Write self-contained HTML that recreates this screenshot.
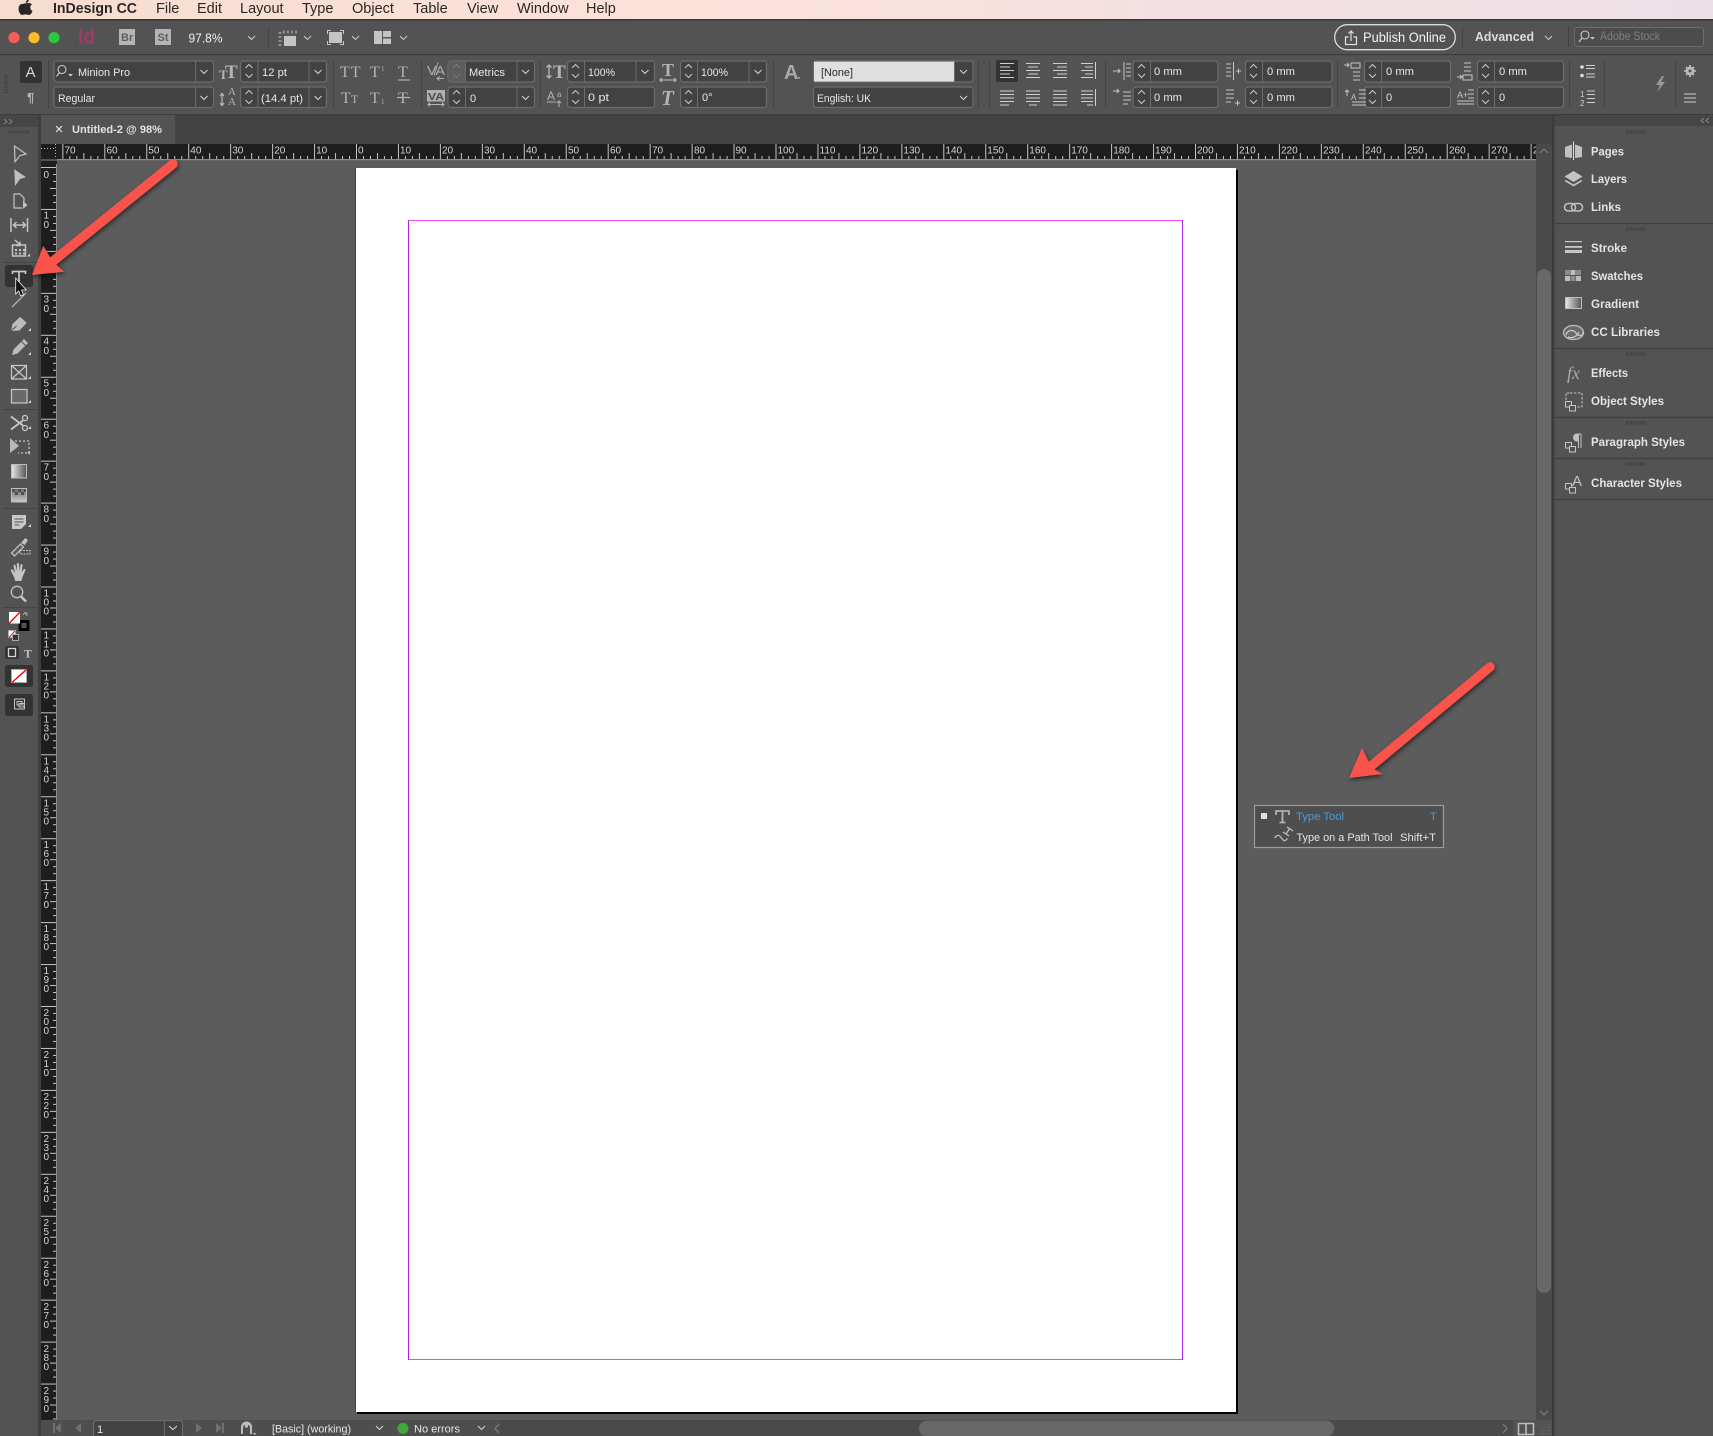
<!DOCTYPE html>
<html><head><meta charset="utf-8"><title>InDesign CC</title>
<style>
html,body{margin:0;padding:0;background:#535353;width:1713px;height:1436px;overflow:hidden}
svg{display:block}
text{font-family:"Liberation Sans",sans-serif;white-space:pre}
.m{font-size:14.5px;fill:#2b2623}
.f{font-size:11px;fill:#e8e8e8}
.p{font-size:11.5px;font-weight:bold;fill:#e4e4e4}
.s{font-family:"Liberation Serif",serif;fill:#b4b4b4}
.h{font-size:10px;fill:#d4d4d4}
.st{font-size:11px;fill:#e6e6e6}
.fb{fill:#424242;stroke:#6c6c6c;stroke-width:1.2}
</style></head><body>
<svg width="1713" height="1436" viewBox="0 0 1713 1436" xmlns="http://www.w3.org/2000/svg">
<defs>
<linearGradient id="mg" x1="0" x2="1" y1="0" y2="0"><stop offset="0" stop-color="#f7dccf"/><stop offset=".4" stop-color="#fde2da"/><stop offset=".72" stop-color="#f3e0e3"/><stop offset="1" stop-color="#ece0e6"/></linearGradient>
<linearGradient id="g1" x1="0" x2="1" y1="0" y2="0"><stop offset="0" stop-color="#e8e8e8"/><stop offset="1" stop-color="#555"/></linearGradient>
<linearGradient id="g2" x1="0" x2="0" y1="0" y2="1"><stop offset="0" stop-color="#666"/><stop offset="1" stop-color="#ccc"/></linearGradient>
<pattern id="hr" patternUnits="userSpaceOnUse" x="356" y="144" width="41.95" height="16"><path d="M.5 0V15M7.5 12V15M14.5 12V15M21.5 9V15M28.5 12V15M35.5 12V15" stroke="#c4c4c4" stroke-width="1" fill="none"/></pattern>
<pattern id="vr" patternUnits="userSpaceOnUse" x="41" y="167" width="16" height="41.95"><path d="M0 .5H15M12 7.5H15M12 14.5H15M9 21.5H15M12 28.5H15M12 35.5H15" stroke="#c4c4c4" stroke-width="1" fill="none"/></pattern>
</defs>

<!-- base -->
<rect width="1713" height="1436" fill="#535353"/>
<rect width="1713" height="19.5" fill="url(#mg)"/>
<rect y="19" width="1713" height="1.5" fill="#3b3735"/>
<rect y="54" width="1713" height="1.2" fill="#3c3c3c"/>
<rect y="114" width="1713" height="1.2" fill="#3c3c3c"/>
<rect x="38" y="115" width="1516" height="29" fill="#424242"/>
<rect y="115" width="38" height="12" fill="#464646"/>
<rect x="1554" y="115" width="159" height="11" fill="#464646"/>
<rect x="38" y="115" width="3" height="1321" fill="#3f3f3f"/>
<rect x="1552" y="115" width="2.4" height="1321" fill="#3c3c3c"/>
<rect x="41" y="115" width="134" height="29" fill="#535353"/>

<!-- menu -->
<path fill="#2a2625" d="M26 3.2C24.4 3.2 23.3 4 22 4 20 4 18.6 6 18.6 9 18.6 12 20.5 15 22 15 23.3 15 24 14.4 25.5 14.4 27 14.4 27.5 15 29 15 30.5 15 32 12.5 32.5 11 29.7 9.8 29.5 5.8 32 4.4 31 3.3 29.5 3 28.5 3 27.6 3 26.8 3.2 26 3.2ZM25.7 2.8C25.7 1.3 26.8 0 28.8 -.5 28.9 1.4 27.7 2.8 25.7 2.8Z"/>
<text x="53" y="13" class="m" font-weight="bold" textLength="84" lengthAdjust="spacingAndGlyphs">InDesign CC</text>
<text x="156" y="13" class="m">File</text><text x="197" y="13" class="m">Edit</text><text x="240" y="13" class="m">Layout</text><text x="302" y="13" class="m">Type</text><text x="352" y="13" class="m">Object</text><text x="413" y="13" class="m">Table</text><text x="467" y="13" class="m">View</text><text x="517" y="13" class="m">Window</text><text x="586" y="13" class="m">Help</text>

<!-- row 1 -->
<circle cx="14" cy="37.7" r="5.6" fill="#fb5b55"/><circle cx="34" cy="37.7" r="5.6" fill="#fdb92c"/><circle cx="54" cy="37.7" r="5.6" fill="#2ec640"/>
<text x="78" y="43.5" font-size="21" font-weight="bold" fill="#a23a68" textLength="17" lengthAdjust="spacingAndGlyphs">Id</text>
<rect x="119" y="29" width="16" height="16" fill="#b5b5b5"/><text x="121" y="41" font-size="11" font-weight="bold" fill="#5f5f5f">Br</text>
<rect x="155" y="29" width="16" height="16" fill="#b5b5b5"/><text x="157.5" y="41" font-size="11" font-weight="bold" fill="#5f5f5f">St</text>
<text x="188.5" y="42.5" font-size="13" fill="#f0f0f0" textLength="34" lengthAdjust="spacingAndGlyphs">97.8%</text>
<path d="M248 36l3.5 3.5 3.5-3.5M304 36l3.5 3.5 3.5-3.5M352 36l3.5 3.5 3.5-3.5M400 36l3.5 3.5 3.5-3.5" fill="none" stroke="#c8c8c8" stroke-width="1.1"/>
<rect x="268" y="27" width="1" height="21" fill="#444"/>
<rect x="284" y="36" width="12" height="10" fill="#c4c4c4"/>
<path d="M278.5 33h3M278.5 37h3M278.5 41h3M278.5 45h3M284 30.500v3M288 30.500v3M292 30.500v3M296 30.500v3" stroke="#c4c4c4" fill="none"/>
<rect x="329" y="32" width="13" height="11" fill="#c4c4c4"/>
<path d="M327.5 34v-3.5h3.5M340 30.5h3.5v3.5M343.5 41v3.5h-3.5M331 44.5h-3.5v-3.5" stroke="#c4c4c4" fill="none"/>
<path fill="#c4c4c4" d="M374 31h8v13h-8zM383 31h8v6h-8zM383 38.5h8v5.5h-8z"/>
<rect x="1334.7" y="24.7" width="120.6" height="25" rx="12.5" fill="none" stroke="#dcdcdc" stroke-width="1.3"/>
<path d="M1348.5 37h-3v7.500h11v-7.500h-3M1351 41v-9.500M1348.500 33.500l2.500-2.500 2.500 2.500" fill="none" stroke="#e0e0e0" stroke-width="1.2"/>
<text x="1363" y="42" font-size="13.5" fill="#f4f4f4" textLength="83" lengthAdjust="spacingAndGlyphs">Publish Online</text>
<rect x="1462" y="27" width="1" height="20" fill="#444"/>
<text x="1475" y="41" font-size="13" font-weight="bold" fill="#dcdcdc" textLength="59" lengthAdjust="spacingAndGlyphs">Advanced</text>
<path d="M1545 36l3.5 3.5 3.5-3.5" fill="none" stroke="#c8c8c8" stroke-width="1.1"/>
<rect x="1568" y="27" width="1" height="20" fill="#444"/>
<rect x="1574.5" y="27.5" width="129" height="19" rx="2.5" fill="#4c4c4c" stroke="#6c6c6c"/>
<circle cx="1585" cy="35" r="4" fill="none" stroke="#c8c8c8" stroke-width="1.1"/><path d="M1582 38l-3 4" stroke="#c8c8c8" stroke-width="1.3"/><path d="M1590 37h5l-2.5 2.5z" fill="#c8c8c8"/>
<text x="1600" y="40" font-size="11.5" fill="#7e7e7e" textLength="60" lengthAdjust="spacingAndGlyphs">Adobe Stock</text>

<!-- row 2 -->
<path d="M4 75h4M4 77.5h4M4 80h4M4 82.5h4M4 85h4M4 87.5h4M4 90h4M4 92.5h4" stroke="#424242" fill="none"/>
<rect x="20" y="61" width="22" height="22" rx="2" fill="#333"/>
<text x="25.5" y="77" font-size="15" fill="#d8d8d8">A</text>
<text x="27" y="102" font-size="13" font-weight="bold" fill="#b8b8b8">¶</text>
<path fill="#444" d="M48 61h1v47h-1zM333 61h1v47h-1zM421 61h1v47h-1zM540 61h1v47h-1zM773 61h1v47h-1zM978 61h1v47h-1zM989 61h1v47h-1zM1105 61h1v47h-1zM1337 61h1v47h-1zM1569 61h1v47h-1zM1604 61h1v47h-1zM1675 61h1v47h-1z"/>

<!-- fields -->
<rect class="fb" x="54" y="61" width="159.5" height="21" rx="3"/><rect class="fb" x="54" y="87" width="159.5" height="20.5" rx="3"/>
<rect class="fb" x="240.5" y="61" width="86" height="21" rx="3"/><rect class="fb" x="240.5" y="87" width="86" height="20.5" rx="3"/>
<rect class="fb" x="448" y="61" width="86.5" height="21" rx="3"/><rect class="fb" x="448" y="87" width="86.5" height="20.5" rx="3"/>
<rect x="448.6" y="61.6" width="16.4" height="20" rx="2" fill="#5d5d5d"/>
<rect class="fb" x="567.5" y="61" width="87" height="21" rx="3"/><rect class="fb" x="567.5" y="87" width="87" height="20.5" rx="3"/>
<rect class="fb" x="680.5" y="61" width="86" height="21" rx="3"/><rect class="fb" x="680.5" y="87" width="86" height="20.5" rx="3"/>
<rect class="fb" x="813.5" y="61" width="159.5" height="21" rx="3"/><rect class="fb" x="813.5" y="87" width="159.5" height="20.5" rx="3"/>
<rect x="814" y="61.6" width="140.5" height="20" fill="#e0e0e0"/>
<rect class="fb" x="1133" y="61" width="85" height="21" rx="3"/><rect class="fb" x="1133" y="87" width="85" height="20.5" rx="3"/>
<rect class="fb" x="1245.5" y="61" width="86.5" height="21" rx="3"/><rect class="fb" x="1245.5" y="87" width="86.5" height="20.5" rx="3"/>
<rect class="fb" x="1364.5" y="61" width="86" height="21" rx="3"/><rect class="fb" x="1364.5" y="87" width="86" height="20.5" rx="3"/>
<rect class="fb" x="1477.5" y="61" width="86" height="21" rx="3"/><rect class="fb" x="1477.5" y="87" width="86" height="20.5" rx="3"/>
<path stroke="#6c6c6c" fill="none" d="M195.5 61v21M195.5 87v20M258 61v21M258 87v20M309 61v21M309 87v20M465.5 61v21M465.5 87v20M517 61v21M517 87v20M584.5 61v21M584.5 87v20M636 61v21M697.5 61v21M697.5 87v20M749 61v21M954.5 61v21M1150.5 61v21M1150.5 87v20M1262.5 61v21M1262.5 87v20M1381.5 61v21M1381.5 87v20M1494.5 61v21M1494.5 87v20"/>
<!-- spinners -->
<path fill="none" stroke="#c8c8c8" stroke-width="1" d="M245.5 68l3.5-3.5 3.5 3.5M245.5 74l3.5 3.5 3.5-3.5M245.5 94l3.5-3.5 3.5 3.5M245.5 100l3.5 3.5 3.5-3.5
M453 94l3.5-3.5 3.5 3.5M453 100l3.5 3.5 3.5-3.5
M572 68l3.5-3.5 3.5 3.5M572 74l3.5 3.5 3.5-3.5M572 94l3.5-3.5 3.5 3.5M572 100l3.5 3.5 3.5-3.5
M685 68l3.5-3.5 3.5 3.5M685 74l3.5 3.5 3.5-3.5M685 94l3.5-3.5 3.5 3.5M685 100l3.5 3.5 3.5-3.5
M1138 68l3.5-3.5 3.5 3.5M1138 74l3.5 3.5 3.5-3.5M1138 94l3.5-3.5 3.5 3.5M1138 100l3.5 3.5 3.5-3.5
M1250 68l3.5-3.5 3.5 3.5M1250 74l3.5 3.5 3.5-3.5M1250 94l3.5-3.5 3.5 3.5M1250 100l3.5 3.5 3.5-3.5
M1369 68l3.5-3.5 3.5 3.5M1369 74l3.5 3.5 3.5-3.5M1369 94l3.5-3.5 3.5 3.5M1369 100l3.5 3.5 3.5-3.5
M1482 68l3.5-3.5 3.5 3.5M1482 74l3.5 3.5 3.5-3.5M1482 94l3.5-3.5 3.5 3.5M1482 100l3.5 3.5 3.5-3.5"/>
<path fill="none" stroke="#7a7a7a" d="M453 68l3.5-3.5 3.5 3.5M453 74l3.5 3.5 3.5-3.5"/>
<!-- dropdown chevrons -->
<path fill="none" stroke="#d0d0d0" stroke-width="1.1" d="M200.5 70l3.5 3.5 3.5-3.5M200.5 96l3.5 3.5 3.5-3.5M314.5 70l3.5 3.5 3.5-3.5M314.5 96l3.5 3.5 3.5-3.5M522 70l3.5 3.5 3.5-3.5M522 96l3.5 3.5 3.5-3.5M641.5 70l3.5 3.5 3.5-3.5M754.5 70l3.5 3.5 3.5-3.5M960 70l3.5 3.5 3.5-3.5M960 96l3.5 3.5 3.5-3.5"/>
<!-- field text -->
<circle cx="62" cy="69.5" r="4" fill="none" stroke="#ccc" stroke-width="1.1"/><path d="M59.5 72.5l-3 4" stroke="#ccc" stroke-width="1.2"/><path d="M68 74h5l-2.500 2.500z" fill="#ccc"/>
<text class="f" x="78" y="76" textLength="52" lengthAdjust="spacingAndGlyphs">Minion Pro</text>
<text class="f" x="58" y="102" textLength="37" lengthAdjust="spacingAndGlyphs">Regular</text>
<text class="f" x="262" y="76" font-size="11.500" textLength="25" lengthAdjust="spacingAndGlyphs">12 pt</text>
<text class="f" x="261" y="102" textLength="42" lengthAdjust="spacingAndGlyphs">(14.4 pt)</text>
<text class="f" x="469" y="76" textLength="36" lengthAdjust="spacingAndGlyphs">Metrics</text>
<text class="f" x="470" y="102">0</text>
<text class="f" x="588" y="76" textLength="27" lengthAdjust="spacingAndGlyphs">100%</text>
<text class="f" x="588" y="101" textLength="21" lengthAdjust="spacingAndGlyphs">0 pt</text>
<text class="f" x="701" y="76" textLength="27" lengthAdjust="spacingAndGlyphs">100%</text>
<text class="f" x="702" y="101">0°</text>
<text class="f" x="821" y="76" style="fill:#2a2a2a" textLength="32" lengthAdjust="spacingAndGlyphs">[None]</text>
<text class="f" x="817" y="102" textLength="54" lengthAdjust="spacingAndGlyphs">English: UK</text>
<text class="f" x="1154" y="75" textLength="28" lengthAdjust="spacingAndGlyphs">0 mm</text><text class="f" x="1154" y="101" textLength="28" lengthAdjust="spacingAndGlyphs">0 mm</text>
<text class="f" x="1267" y="75" textLength="28" lengthAdjust="spacingAndGlyphs">0 mm</text><text class="f" x="1267" y="101" textLength="28" lengthAdjust="spacingAndGlyphs">0 mm</text>
<text class="f" x="1386" y="75" textLength="28" lengthAdjust="spacingAndGlyphs">0 mm</text><text class="f" x="1386" y="101">0</text>
<text class="f" x="1499" y="75" textLength="28" lengthAdjust="spacingAndGlyphs">0 mm</text><text class="f" x="1499" y="101">0</text>

<!-- char icons -->
<text class="s" x="219" y="79" font-size="13" font-weight="bold">T</text>
<text class="s" x="225" y="78" font-size="19" font-weight="bold">T</text>
<text class="s" x="228" y="95" font-size="11">A</text><text class="s" x="228" y="105" font-size="11">A</text>
<path d="M222 94v11M220 96l2-2.500 2 2.500M220 103l2 2.500 2-2.500" fill="none" stroke="#b8b8b8" stroke-width="1.2"/>
<text class="s" x="340" y="77" font-size="16" letter-spacing="1">TT</text>
<text class="s" x="370" y="77" font-size="16">T</text><text class="s" x="381" y="71" font-size="7">1</text>
<text class="s" x="398" y="77" font-size="16">T</text><path d="M398 80h12" stroke="#b4b4b4" stroke-width="1.2"/>
<text class="s" x="341" y="103" font-size="16">T</text><text class="s" x="351" y="103" font-size="12">T</text>
<text class="s" x="370" y="103" font-size="16">T</text><text class="s" x="381" y="104" font-size="7">1</text>
<text class="s" x="398" y="103" font-size="16">T</text><path d="M397 97.500h13" stroke="#b4b4b4" stroke-width="1.200"/>
<text x="427" y="75" font-size="12.5" fill="#b0b0b0" textLength="18" lengthAdjust="spacingAndGlyphs">VA</text>
<path d="M438 62.500l-4 13" stroke="#b0b0b0" fill="none"/>
<path d="M437 78.500h7M439.500 76.500l-2.500 2 2.500 2" fill="none" stroke="#b0b0b0"/>
<rect x="427" y="90" width="18" height="11.500" fill="#b0b0b0"/><text x="428" y="100" font-size="10.500" font-weight="bold" fill="#484848" textLength="16" lengthAdjust="spacingAndGlyphs">VA</text>
<path d="M428 104.500h16M430 102.500l-2 2 2 2M442 102.500l2 2-2 2" fill="none" stroke="#b8b8b8"/>
<text class="s" x="553" y="78" font-size="19" font-weight="bold">T</text>
<path d="M549 65v13M546.500 67.500l2.500-2.500 2.500 2.500M546.500 75.500l2.500 2.500 2.500-2.500" fill="none" stroke="#c0c0c0" stroke-width="1.200"/>
<text x="547" y="100" font-size="12" fill="#b4b4b4">A</text><text x="557" y="97" font-size="8" fill="#b4b4b4">a</text>
<path d="M547 102h9M559 107v-6M557 103l2-2 2 2" fill="none" stroke="#b4b4b4"/>
<text class="s" x="662" y="76" font-size="18" font-weight="bold">T</text>
<path d="M660 80h16M662 78l-2 2 2 2M674 78l2 2-2 2" fill="none" stroke="#c0c0c0"/>
<text class="s" x="661" y="105" font-size="21" font-weight="bold" font-style="italic">T</text>
<text x="784" y="79" font-size="20" font-weight="bold" fill="#aaa">A</text><rect x="798" y="77" width="2" height="1.500" fill="#aaa"/>

<!-- align -->
<rect x="996" y="60" width="22" height="22" rx="2" fill="#333"/>
<path fill="none" stroke="#cfcfcf" d="M1000 63.500h14M1000 67h10M1000 70.500h14M1000 74h10M1000 77.500h14
M1026 63.500h14M1028 67h10M1026 70.500h14M1028 74h10M1026 77.500h14
M1053 63.500h14M1057 67h10M1053 70.500h14M1057 74h10M1053 77.500h14
M1081 63.500h12M1085 67h8M1081 70.500h12M1085 74h8M1081 77.500h12M1095.500 62v17
M1000 91h14M1000 94.500h14M1000 98h14M1000 101.500h14M1000 105h9
M1026 91h14M1026 94.500h14M1026 98h14M1026 101.500h14M1029 105h8
M1053 91h14M1053 94.500h14M1053 98h14M1053 101.500h14M1053 105h14
M1081 91h12M1081 94.500h12M1081 98h12M1081 101.500h12M1087 105h6M1095.500 89v17"/>
<path fill="none" stroke="#c4c4c4" d="M1124 62v18M1126 64h5M1126 68h5M1126 72h5M1126 76h5M1113 71h7M1118 69l2 2-2 2
M1226 64h5M1226 68h5M1226 72h5M1226 76h5M1233.500 62v18M1236 71h5M1238.500 68.500v5
M1123 92h8M1123 96h8M1123 100h8M1123 104h5M1113 91h6M1117 89l2 2-2 2
M1226 90h8M1226 94h8M1226 98h8M1226 102h5M1235 103h5M1237.500 100.500v5
M1351 63h9v5h-9zM1353 72h7M1353 76h7M1353 80h7M1344 65h5M1347 63l2 2-2 2
M1464 63h7M1464 67h7M1464 71h7M1463 75h9v5h-9zM1457 77h5M1460 75l2 2-2 2
M1359 90h7M1359 94h7M1359 98h7M1352 102h14M1352 105h14M1347 90v6M1345 92l2-2 2 2
M1468 90h6M1468 94h6M1468 98h6M1457 101h17M1457 104h17"/>
<text x="1351" y="100" font-size="8" fill="#c4c4c4">A</text>
<text x="1457" y="98" font-size="9" fill="#c4c4c4">A+</text>
<!-- lists -->
<circle cx="1582" cy="67" r="1.800" fill="#ddd"/><circle cx="1582" cy="75.500" r="1.800" fill="#ddd"/>
<path d="M1586 65.500h9M1586 68.500h9M1586 74h9M1586 77h9M1587 91h8M1587 94.500h8M1587 98.500h8M1587 102.500h8" stroke="#cfcfcf" fill="none"/>
<text x="1580" y="97" font-size="8" fill="#cfcfcf">1</text><text x="1580" y="106" font-size="8" fill="#cfcfcf">2</text>
<path d="M1662 76l-6 9h4l-3 7 8-10h-4l3-6z" fill="#999"/>
<circle cx="1690" cy="71" r="3" fill="none" stroke="#b8b8b8" stroke-width="3"/>
<path d="M1690 65v12M1684 71h12M1686 67l8 8M1694 67l-8 8" stroke="#b8b8b8" stroke-width="1.800"/><circle cx="1690" cy="71" r="1.500" fill="#535353"/>
<path d="M1684 94h12M1684 98h12M1684 102h12" stroke="#ccc" fill="none"/>

<!-- tab -->
<path d="M4 119l3 2.500-3 2.500M9 119l3 2.500-3 2.500" fill="none" stroke="#9a9a9a" stroke-width=".8"/>
<path d="M1709 118l-3 2.500 3 2.500M1704 118l-3 2.500 3 2.500" fill="none" stroke="#9a9a9a" stroke-width=".8"/>
<path d="M56 126l6 6M62 126l-6 6" stroke="#e0e0e0" stroke-width="1.200"/>
<text x="72" y="133" font-size="11" font-weight="bold" fill="#e2e2e2" textLength="90" lengthAdjust="spacingAndGlyphs">Untitled-2 @ 98%</text>

<!-- canvas -->
<rect x="41" y="144" width="1495" height="1276" fill="#5c5c5c"/>
<rect x="41" y="144" width="1495" height="16" fill="#1e1e1e"/>
<rect x="41" y="144" width="1495" height="15.500" fill="url(#hr)"/>
<rect x="41" y="159" width="1495" height="1.200" fill="#8c8c8c"/>
<rect x="41" y="144" width="16" height="1276" fill="#1e1e1e"/>
<rect x="41" y="160" width="15" height="1260" fill="url(#vr)"/>
<rect x="56" y="160" width="1" height="1260" fill="#8c8c8c"/>
<rect x="41" y="144" width="16" height="20" fill="#1e1e1e"/>
<path d="M41 148.500h15M55.500 144v14" stroke="#bbb" stroke-dasharray="1 2" fill="none"/>
<rect x="41" y="159.500" width="16" height="1" fill="#888"/>
<g class="h">
<text x="64.500" y="153.500" class="h">70</text><text x="106.500" y="153.500" class="h">60</text><text x="148.300" y="153.500" class="h">50</text><text x="190.300" y="153.500" class="h">40</text><text x="232.200" y="153.500" class="h">30</text><text x="274.200" y="153.500" class="h">20</text><text x="316.100" y="153.500" class="h">10</text><text x="358" y="153.500" class="h">0</text>
<text x="400" y="153.500" class="h">10</text><text x="442" y="153.500" class="h">20</text><text x="484" y="153.500" class="h">30</text><text x="526" y="153.500" class="h">40</text><text x="568" y="153.500" class="h">50</text><text x="610" y="153.500" class="h">60</text><text x="652" y="153.500" class="h">70</text><text x="694" y="153.500" class="h">80</text><text x="735.500" y="153.500" class="h">90</text><text x="777.500" y="153.500" class="h">100</text><text x="819.500" y="153.500" class="h">110</text><text x="861.500" y="153.500" class="h">120</text><text x="903.400" y="153.500" class="h">130</text><text x="945.400" y="153.500" class="h">140</text><text x="987.300" y="153.500" class="h">150</text><text x="1029.300" y="153.500" class="h">160</text><text x="1071.200" y="153.500" class="h">170</text><text x="1113.200" y="153.500" class="h">180</text><text x="1155" y="153.500" class="h">190</text><text x="1197" y="153.500" class="h">200</text><text x="1239" y="153.500" class="h">210</text><text x="1281" y="153.500" class="h">220</text><text x="1323" y="153.500" class="h">230</text><text x="1365" y="153.500" class="h">240</text><text x="1407" y="153.500" class="h">250</text><text x="1449" y="153.500" class="h">260</text><text x="1491" y="153.500" class="h">270</text><text x="1533" y="153.500" class="h">2</text>
<text class="h" x="43.500" y="178">0</text>
<text class="h" x="43.500" y="218.500">1<tspan x="43.500" dy="9.500">0</tspan></text>
<text class="h" x="43.500" y="260.500">2<tspan x="43.500" dy="9.500">0</tspan></text>
<text class="h" x="43.500" y="302.500">3<tspan x="43.500" dy="9.500">0</tspan></text>
<text class="h" x="43.500" y="344.500">4<tspan x="43.500" dy="9.500">0</tspan></text>
<text class="h" x="43.500" y="386.500">5<tspan x="43.500" dy="9.500">0</tspan></text>
<text class="h" x="43.500" y="428.500">6<tspan x="43.500" dy="9.500">0</tspan></text>
<text class="h" x="43.500" y="470.500">7<tspan x="43.500" dy="9.500">0</tspan></text>
<text class="h" x="43.500" y="512.500">8<tspan x="43.500" dy="9.500">0</tspan></text>
<text class="h" x="43.500" y="554.500">9<tspan x="43.500" dy="9.500">0</tspan></text>
<text class="h" x="43.500" y="596.500">1<tspan x="43.500" dy="9">0</tspan><tspan x="43.500" dy="9">0</tspan></text>
<text class="h" x="43.500" y="638.500">1<tspan x="43.500" dy="9">1</tspan><tspan x="43.500" dy="9">0</tspan></text>
<text class="h" x="43.500" y="680.500">1<tspan x="43.500" dy="9">2</tspan><tspan x="43.500" dy="9">0</tspan></text>
<text class="h" x="43.500" y="722.500">1<tspan x="43.500" dy="9">3</tspan><tspan x="43.500" dy="9">0</tspan></text>
<text class="h" x="43.500" y="764.500">1<tspan x="43.500" dy="9">4</tspan><tspan x="43.500" dy="9">0</tspan></text>
<text class="h" x="43.500" y="806.500">1<tspan x="43.500" dy="9">5</tspan><tspan x="43.500" dy="9">0</tspan></text>
<text class="h" x="43.500" y="848">1<tspan x="43.500" dy="9">6</tspan><tspan x="43.500" dy="9">0</tspan></text>
<text class="h" x="43.500" y="890">1<tspan x="43.500" dy="9">7</tspan><tspan x="43.500" dy="9">0</tspan></text>
<text class="h" x="43.500" y="932">1<tspan x="43.500" dy="9">8</tspan><tspan x="43.500" dy="9">0</tspan></text>
<text class="h" x="43.500" y="974">1<tspan x="43.500" dy="9">9</tspan><tspan x="43.500" dy="9">0</tspan></text>
<text class="h" x="43.500" y="1016">2<tspan x="43.500" dy="9">0</tspan><tspan x="43.500" dy="9">0</tspan></text>
<text class="h" x="43.500" y="1058">2<tspan x="43.500" dy="9">1</tspan><tspan x="43.500" dy="9">0</tspan></text>
<text class="h" x="43.500" y="1100">2<tspan x="43.500" dy="9">2</tspan><tspan x="43.500" dy="9">0</tspan></text>
<text class="h" x="43.500" y="1142">2<tspan x="43.500" dy="9">3</tspan><tspan x="43.500" dy="9">0</tspan></text>
<text class="h" x="43.500" y="1184">2<tspan x="43.500" dy="9">4</tspan><tspan x="43.500" dy="9">0</tspan></text>
<text class="h" x="43.500" y="1226">2<tspan x="43.500" dy="9">5</tspan><tspan x="43.500" dy="9">0</tspan></text>
<text class="h" x="43.500" y="1268">2<tspan x="43.500" dy="9">6</tspan><tspan x="43.500" dy="9">0</tspan></text>
<text class="h" x="43.500" y="1310">2<tspan x="43.500" dy="9">7</tspan><tspan x="43.500" dy="9">0</tspan></text>
<text class="h" x="43.500" y="1352">2<tspan x="43.500" dy="9">8</tspan><tspan x="43.500" dy="9">0</tspan></text>
<text class="h" x="43.500" y="1394">2<tspan x="43.500" dy="9">9</tspan><tspan x="43.500" dy="9">0</tspan></text>
</g>

<!-- page -->
<rect x="355" y="168" width="1" height="1244" fill="#444"/>
<rect x="356" y="168" width="880" height="1244" fill="#fff"/>
<rect x="357" y="1412" width="881" height="2" fill="#000"/>
<rect x="1236" y="170" width="2" height="1244" fill="#000"/>
<path d="M408.500 220.500H1182.500M408.500 1359.500H1182.500" stroke="#e44ce8" fill="none"/>
<path d="M408.500 220V1360M1182.500 220V1360" stroke="#a625f0" fill="none"/>

<!-- scrollbars -->
<rect x="1536" y="144" width="16" height="1276" fill="#4a4a4a"/>
<rect x="1537" y="269" width="14" height="1024" rx="7" fill="#686868"/>
<path d="M1540 153l4-4 4 4M1540 1411l4 4 4-4" fill="none" stroke="#808080" stroke-width="1.100"/>
<rect x="41" y="1420" width="1495" height="16" fill="#4e4e4e"/>
<rect x="500" y="1420" width="1013" height="16" fill="#4a4a4a"/>
<rect x="919" y="1420.500" width="415" height="16" rx="8" fill="#676767"/>
<rect x="1513" y="1420" width="39" height="16" fill="#535353"/>
<path d="M1503 1424l4 4.500-4 4.500" fill="none" stroke="#808080" stroke-width="1.100"/>
<path d="M1518.500 1423.500h15v11h-15zM1526 1423.500v11" fill="none" stroke="#bdbdbd" stroke-width="1.600"/>
<path d="M1549 1424v1M1546 1427v1M1549 1427v1M1543 1430v1M1546 1430v1M1549 1430v1M1540 1433v1M1543 1433v1M1546 1433v1M1549 1433v1" stroke="#777" fill="none"/>
<!-- status -->
<path fill="#6f6f6f" d="M53 1423h2v10h-2zM61 1423v10l-6-5zM81 1423v10l-6-5zM196 1423l6 5-6 5zM216 1423l6 5-6 5zM222 1423h2v10h-2z"/>
<rect x="93.500" y="1420.600" width="89" height="18" rx="3" fill="#424242" stroke="#6c6c6c" stroke-width="1.100"/>
<path d="M164.500 1420v16" stroke="#6c6c6c"/>
<path d="M169 1426l4 3.500 4-3.500M376 1426l3.500 3.500 3.500-3.500M478 1426l3.500 3.500 3.500-3.500" fill="none" stroke="#d0d0d0" stroke-width="1.100"/>
<path d="M499 1424l-4 4.500 4 4.500" fill="none" stroke="#808080" stroke-width="1.100"/>
<text x="97" y="1433" class="st" font-size="12">1</text>
<path d="M241 1434v-7a5.500 5.500 0 0 1 11 0v7h-2v-6.500a3.500 3.500 0 0 0-2-2.800v2.800h-3v-2.800a3.500 3.500 0 0 0-2 2.800v6.500z" fill="#bdbdbd"/><path d="M252.500 1433h4l-2 2z" fill="#bdbdbd"/>
<text x="272" y="1432.500" class="st" textLength="79" lengthAdjust="spacingAndGlyphs">[Basic] (working)</text>
<circle cx="403" cy="1428.500" r="5.500" fill="#3fa842"/>
<text x="414" y="1432.500" class="st" textLength="46" lengthAdjust="spacingAndGlyphs">No errors</text>

<!-- tools -->
<path d="M9 132h20" stroke="#3d3d3d" stroke-width="3" stroke-dasharray="1 1.400"/>
<path d="M3 262.500h34M3 409.500h34M3 508.500h34M3 607.500h34" stroke="#454545" fill="none"/>
<path d="M14.500 146l11.500 8-6 1.500-5 6.200z" fill="none" stroke="#c0c0c0" stroke-width="1.200"/>
<path d="M14.300 169.300l11.700 8-6 1.700-5 7z" fill="#c0c0c0"/>
<path d="M14 194h6l4 4v4M14 194v14h8" fill="none" stroke="#c4c4c4" stroke-width="1.200"/><path d="M23 201l4.500 4-4.500 4z" fill="#c4c4c4"/>
<path d="M11 218v14M27.500 218v14M13 225h13M16.500 222l-3 3 3 3M22.500 222l3 3-3 3" fill="none" stroke="#c4c4c4" stroke-width="1.500"/>
<path d="M12.500 245h13v11h-13z" fill="none" stroke="#c4c4c4" stroke-width="1.500"/><path d="M15 240l5 5M20 241.500v4h-4" fill="none" stroke="#c4c4c4" stroke-width="1.500"/><path d="M15 249h2v2h-2zM19 249h2v2h-2zM23 249h2v2h-2zM15 252.500h2v2h-2zM19 252.500h2v2h-2zM23 252.500h2v2h-2z" fill="#c4c4c4"/>
<path d="M30 253.500v3h-3zM32 282v3h-3zM31 328v3h-3zM31 352v3h-3zM31 376v3h-3zM31 400v3h-3zM31 426v3h-3zM31 524v3h-3zM31 683v3h-3zM31 711v3h-3z" fill="#d4d4d4"/>
<rect x="5" y="265" width="28" height="22" rx="2.500" fill="#333"/>
<path d="M12.500 274v-2.500h13v2.500M19 271.500V286M16.500 286h5" fill="none" stroke="#c8c8c8" stroke-width="1.700"/>
<path d="M12 307l14-14" stroke="#bfbfbf" stroke-width="1.200"/>
<path d="M11 331l1.500-7 8-7.500 6.500 6-7.500 8z" fill="#bcbcbc"/><path d="M11 331l5.500-5M20.500 316.500l6.500 6" stroke="#535353" stroke-width="1" fill="none"/>
<path d="M12 355l1.500-5.500 10.500-10.500 4 4-10.500 10.500z" fill="#bcbcbc"/><path d="M21.500 341.500l4 4" stroke="#535353" fill="none"/>
<path d="M11.500 365.500h15v13.500h-15zM11.500 365.500l15 13.500M26.500 365.500l-15 13.500" fill="none" stroke="#c8c8c8" stroke-width="1.200"/>
<rect x="11.500" y="389.500" width="15.500" height="13.500" fill="#6a6a6a" stroke="#c8c8c8" stroke-width="1.200"/>
<circle cx="25" cy="418" r="2.500" fill="none" stroke="#c8c8c8" stroke-width="1.300"/><circle cx="25" cy="428" r="2.500" fill="none" stroke="#c8c8c8" stroke-width="1.300"/><path d="M11 416.500l12 9M11 429.500l12-9" stroke="#c8c8c8" stroke-width="1.800" fill="none"/>
<path d="M10 438l9 8-9 7z" fill="#b8b8b8"/><path d="M15 441h14v12h-11" fill="none" stroke="#c4c4c4" stroke-dasharray="2 2" stroke-width="1.300"/><path d="M27 452l3 3v-3z" fill="#c4c4c4"/>
<rect x="11.500" y="464.500" width="15" height="13.500" fill="url(#g1)" stroke="#bdbdbd"/>
<rect x="11.500" y="488.500" width="15" height="13.500" fill="url(#g2)" stroke="#bdbdbd"/>
<path d="M12 489h3v3h-3zM18 489h3v3h-3zM24 489h2v3h-2zM15 492h3v3h-3zM21 492h3v3h-3z" fill="#505050"/>
<path d="M12 515h14v9l-5 5h-9z" fill="#c8c8c8"/><path d="M14.500 519h9M14.500 522h9M14.500 525h5" stroke="#555" fill="none"/>
<path d="M11.500 553l9-9 3 3-9 9z" fill="#5c5c5c" stroke="#c0c0c0" stroke-width="1.300"/><path d="M21 543l4-5 3 2-3 5z" fill="#c0c0c0"/><path d="M20 550.500h10v3.500h-10z" fill="none" stroke="#c4c4c4" stroke-dasharray="2 1"/>
<path d="M14 577l-3-6c-.6-1.500 1-2.500 2-1l2 3-1.500-7c-.3-1.500 1.500-2 2-.6l1.500 5.500-.2-7c0-1.400 2-1.400 2.200 0l.5 7 1-6c.3-1.400 2.200-1 2 .4l-.8 7 1.800-2.800c.8-1.200 2.500-.3 1.800 1l-3 7-1 3.500h-6z" fill="#c4c4c4"/>
<circle cx="17" cy="592" r="5.700" fill="none" stroke="#c4c4c4" stroke-width="1.300"/><path d="M21 596.500l5 5" stroke="#c4c4c4" stroke-width="2.500"/>
<!-- colors -->
<rect x="20" y="621.500" width="8" height="8" fill="none" stroke="#000" stroke-width="3"/>
<rect x="9" y="612" width="11" height="11.500" fill="#fff"/><path d="M9 623.500l11-11.500" stroke="#f00" stroke-width="1.300"/>
<path d="M25 613a3 3 0 0 1 2 3M23 615l2-2.500 2.500 1" fill="none" stroke="#aaa"/>
<rect x="8.500" y="630.500" width="7" height="7" fill="#fff" stroke="#aaa"/><path d="M9 637.500l6-6.500" stroke="#f00"/>
<rect x="12.500" y="634.500" width="6" height="6" fill="#333" stroke="#aaa"/>
<rect x="5" y="646" width="14" height="13" rx="2.500" fill="#333"/><rect x="8.500" y="648.500" width="7" height="8" fill="none" stroke="#d4d4d4" stroke-width="1.300"/>
<text x="24" y="657.500" font-size="11.500" font-weight="bold" fill="#c4c4c4" style="font-family:'Liberation Serif',serif">T</text>
<rect x="5" y="665" width="28" height="22" rx="2.500" fill="#333"/>
<rect x="11.500" y="669.500" width="15" height="13" fill="#fff" stroke="#aaa"/><path d="M12 682.500l14.500-13" stroke="#f00" stroke-width="1.500"/>
<rect x="5" y="694" width="28" height="22" rx="2.500" fill="#333"/>
<rect x="14.500" y="699" width="10" height="10" fill="none" stroke="#c4c4c4"/><rect x="17" y="701.500" width="5" height="3.500" fill="none" stroke="#c4c4c4"/><rect x="19" y="703.500" width="5" height="3.500" fill="none" stroke="#c4c4c4"/>

<!-- cursor -->
<path d="M15.700 278l10.500 12h-4.700l2 4.800-2.800 1.200-2-5-3 3z" fill="#111" stroke="#eee" stroke-width=".8"/>

<!-- arrows -->
<g style="filter:drop-shadow(1px 2px 2px rgba(0,0,0,.55))">
<path d="M173 164L52 262" stroke="#f9534c" stroke-width="9.500" stroke-linecap="round"/>
<path d="M32 275L43.300 245.700 53 262 64.300 271.700z" fill="#f9534c"/>
<path d="M1490 667L1370 767" stroke="#f9534c" stroke-width="9.500" stroke-linecap="round"/>
<path d="M1349 778L1362 748 1372 768 1383 774z" fill="#f9534c"/>
</g>

<!-- flyout -->
<rect x="1254.500" y="805.500" width="189" height="42" fill="#4e4e4e" stroke="#9c9c9c" stroke-width="1.200"/>
<rect x="1261" y="813" width="6" height="6" fill="#e0e0e0"/>
<path d="M1276 815v-4h13v4M1282.500 811v11.500M1279.500 822.500h6" fill="none" stroke="#b0b0b0" stroke-width="1.800"/>
<text x="1296" y="820" font-size="11" fill="#4a9ad6" textLength="48" lengthAdjust="spacingAndGlyphs">Type Tool</text>
<text x="1430" y="820" font-size="11" fill="#4a9ad6">T</text>
<path d="M1274.500 838c3-4 5-3 7 0s3 4 6 .5M1283 832l6 4M1286 834l4-6M1287 827l6 4" fill="none" stroke="#c0c0c0" stroke-width="1.200"/>
<text x="1296.500" y="841" font-size="11" fill="#e4e4e4" textLength="96" lengthAdjust="spacingAndGlyphs">Type on a Path Tool</text>
<text x="1400" y="841" font-size="11" fill="#e4e4e4" textLength="36" lengthAdjust="spacingAndGlyphs">Shift+T</text>

<!-- right panel -->
<path d="M1554 223.500h159M1554 348.500h159M1554 417.500h159M1554 458.500h159M1554 499.500h159" stroke="#3f3f3f" stroke-width="1.200"/>
<path d="M1626 132h20M1626 229h20M1626 354h20M1626 423h20M1626 464h20" stroke="#3d3d3d" stroke-width="3.500" stroke-dasharray="1 1.300"/>
<path d="M1565 147l7-2.500V158l-7-1zM1582 147l-7-2.500V158l7-1z" fill="#c0c0c0"/><path d="M1573.500 141.500v18.500" stroke="#ddd"/>
<path d="M1573.500 171l9 5.500-9 5.500-9-5.500z" fill="#c4c4c4"/><path d="M1566 180l7.500 4.500 7.500-4.500 1.500 1-9 5.500-9-5.500z" fill="#c4c4c4"/>
<rect x="1564.500" y="203.500" width="11" height="7.500" rx="3.700" fill="none" stroke="#c0c0c0" stroke-width="1.500"/><rect x="1571.500" y="203.500" width="11" height="7.500" rx="3.700" fill="none" stroke="#c0c0c0" stroke-width="1.500"/>
<rect x="1565" y="241" width="17" height="1.200" fill="#c8c8c8"/><rect x="1565" y="246" width="17" height="1.800" fill="#c8c8c8"/><rect x="1565" y="250" width="17" height="3" fill="#c8c8c8"/>
<path d="M1565 270h5v5h-5zM1576 270h5v5h-5zM1570.500 276h5v5h-5z" fill="#8a8a8a"/><path d="M1570.500 270h5v5h-5zM1565 276h5v5h-5zM1576 276h5v5h-5z" fill="#bcbcbc"/>
<rect x="1565.500" y="297.500" width="16" height="11" fill="url(#g1)" stroke="#bdbdbd"/>
<ellipse cx="1573.500" cy="332.500" rx="10" ry="7" fill="#6a6a6a" stroke="#bdbdbd" stroke-width="1.300"/>
<path d="M1566 335c1-5 7-6 10-2s8 3 7-2M1568 337c5 2 9-1 11-5" fill="none" stroke="#c8c8c8" stroke-width="1.300"/>
<text x="1567" y="379" font-size="18" font-style="italic" fill="#a8a8a8" style="font-family:'Liberation Serif',serif">fx</text>
<path d="M1570 393h12v14h-5M1566 400v-7h4" fill="none" stroke="#c0c0c0" stroke-dasharray="2.500 1.500" stroke-width="1.100"/>
<rect x="1565.500" y="401.500" width="6" height="5.500" fill="#535353" stroke="#c4c4c4"/><rect x="1569.500" y="405.500" width="6" height="5.500" fill="#535353" stroke="#c4c4c4"/>
<path d="M1581 434h-4a3 3 0 0 0 0 7h1.500v-7M1578.500 434v14M1581 434v14" fill="#c0c0c0" stroke="#c0c0c0"/>
<rect x="1565.500" y="442.500" width="6" height="5.500" fill="#535353" stroke="#c4c4c4"/><rect x="1569.500" y="446.500" width="6" height="5.500" fill="#535353" stroke="#c4c4c4"/>
<text x="1572" y="486" font-size="15" fill="#c4c4c4">A</text>
<rect x="1565.500" y="483.500" width="6" height="5.500" fill="#535353" stroke="#c4c4c4"/><rect x="1569.500" y="487.500" width="6" height="5.500" fill="#535353" stroke="#c4c4c4"/>

<text class="p" x="1591" y="155.500" textLength="33" lengthAdjust="spacingAndGlyphs">Pages</text>
<text class="p" x="1591" y="183" textLength="36" lengthAdjust="spacingAndGlyphs">Layers</text>
<text class="p" x="1591" y="211" textLength="30" lengthAdjust="spacingAndGlyphs">Links</text>
<text class="p" x="1591" y="252" textLength="36" lengthAdjust="spacingAndGlyphs">Stroke</text>
<text class="p" x="1591" y="280" textLength="52" lengthAdjust="spacingAndGlyphs">Swatches</text>
<text class="p" x="1591" y="308" textLength="48" lengthAdjust="spacingAndGlyphs">Gradient</text>
<text class="p" x="1591" y="336" textLength="69" lengthAdjust="spacingAndGlyphs">CC Libraries</text>
<text class="p" x="1591" y="377" textLength="37" lengthAdjust="spacingAndGlyphs">Effects</text>
<text class="p" x="1591" y="405" textLength="73" lengthAdjust="spacingAndGlyphs">Object Styles</text>
<text class="p" x="1591" y="446" textLength="94" lengthAdjust="spacingAndGlyphs">Paragraph Styles</text>
<text class="p" x="1591" y="487" textLength="91" lengthAdjust="spacingAndGlyphs">Character Styles</text>
</svg>
</body></html>
